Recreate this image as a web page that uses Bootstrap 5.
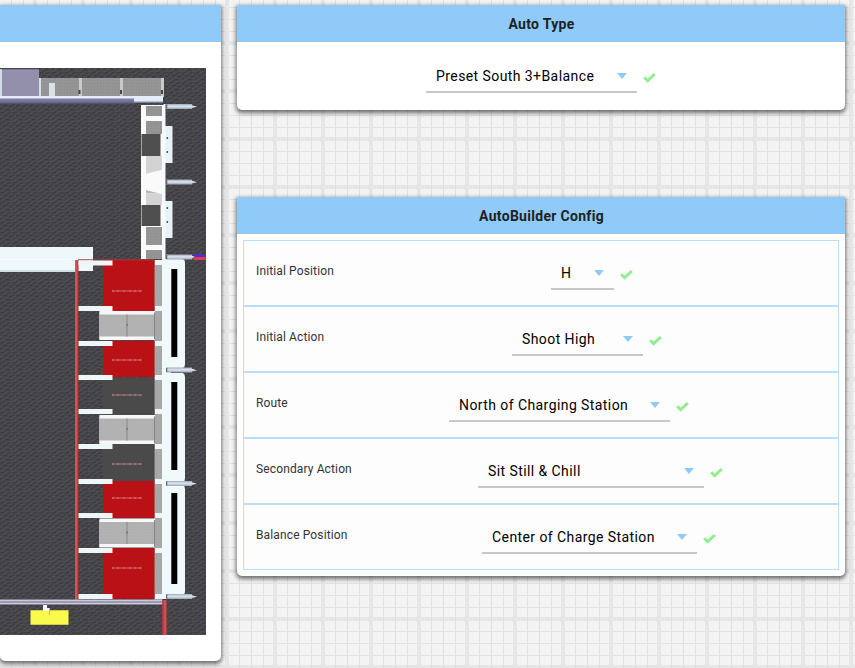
<!DOCTYPE html>
<html lang="en">
<head>
<meta charset="utf-8">
<meta name="viewport" content="width=device-width, initial-scale=1">
<title>AutoBuilder</title>
<link href="https://cdn.jsdelivr.net/npm/bootstrap@5.3.0/dist/css/bootstrap.min.css" rel="stylesheet">
<style>
body{height:668px;overflow:hidden;font-family:Roboto,"Liberation Sans",sans-serif;background-color:#f3f3f3;
background-image:
linear-gradient(90deg,#e6e6e6 4px,transparent 4px 14px,#e1e1e1 14px 15px,transparent 15px 26px,#e1e1e1 26px 27px,transparent 27px 38px,#e1e1e1 38px 39px,transparent 39px),
linear-gradient(#e6e6e6 4px,transparent 4px 14px,#e1e1e1 14px 15px,transparent 15px 26px,#e1e1e1 26px 27px,transparent 27px 38px,#e1e1e1 38px 39px,transparent 39px);
background-size:48px 48px;background-position:33px 41px}
.panel{border:0;border-radius:0 0 5px 5px;box-shadow:0 2px 4px 1px rgba(0,0,0,.55)}
.panel-title{height:37px;padding-left:1px;background:#90caf9;color:#212121;font-size:14px;font-weight:700;line-height:39px;letter-spacing:.3px}
.page{gap:16px;padding-top:5px}
.field-panel{width:221px;height:656px}
.side{width:608px;gap:87px}
.type-panel{height:105px}
.config-panel{height:379px}
.field-panel svg{margin-top:26px}
.options{margin:6px 6px 0}
.option-row{height:66px;border:1px solid #bbdefb;background:#fdfdfd}
.option-label{width:194px;padding:0 0 5px 12px;font-size:12px;color:#333;letter-spacing:.13px}
.picker{height:33px;padding:0 10px;border:0;border-bottom:2px solid #c8c8c8;background:transparent;color:#000;font-size:14px;line-height:1;letter-spacing:.42px;white-space:nowrap}
.option-row .picker{padding-top:2px}
.caret{width:10px;height:6px;margin-top:1px;background:#90caf9;clip-path:polygon(0 0,100% 0,50% 100%)}
.option-row .caret{margin-top:0}
.tick{margin:1px 0 0 6px}
.option-row .tick{margin-top:2px}
.type-row{padding-top:18px}
.type-picker{width:211px;margin-left:189px}
.p1{width:63px;margin-left:113px}.p2{width:131px;margin-left:74px}.p3{width:221px;margin-left:11px}.p4{width:226px;margin-left:40px}.p5{width:215px;margin-left:44px}
</style>
<script src="https://cdn.jsdelivr.net/npm/bootstrap@5.3.0/dist/js/bootstrap.bundle.min.js"></script>
</head>
<body>
<svg width="0" height="0" class="position-absolute"><symbol id="tick" viewBox="0 0 13 11"><path d="M1.2 5.2 4.7 8.7 11.8 2" fill="none" stroke="#90ee90" stroke-width="3"/></symbol></svg>
<main class="page d-flex align-items-start">
<section class="card panel field-panel flex-shrink-0">
<div class="panel-title"></div>
<svg width="206" height="567" viewBox="0 68 206 567" class="d-block" role="img" aria-label="Playing field">
<defs>
<pattern id="carpet" width="13" height="10" patternUnits="userSpaceOnUse"><rect width="13" height="10" fill="#444348"/><path d="M0 1.5 3 .5M5 2.5 9 1.5M10 1l3 .5M2 4.5l4-1M8 5l4-1M0 7l3-1M5 8l4-1M10 9l3-1M2 9.5l3-.5" stroke="#504f54" stroke-width="1.2" fill="none"/><path d="M1 3 4 2.5M7 3.5 10 3M3 6 6 5M9 7l3-1M0 9h2M6 9.7h3" stroke="#3a393e" stroke-width="1.2" fill="none"/></pattern>
<pattern id="metal" width="3" height="3" patternUnits="userSpaceOnUse"><rect width="3" height="3" fill="#929292"/><path d="M0 0h1v1H0zM2 1h1v1H2z" fill="#9a9a9a"/></pattern>
<pattern id="plate" width="3" height="3" patternUnits="userSpaceOnUse"><rect width="3" height="3" fill="#b3b3b3"/><path d="M0 0h1v1H0zM2 1h1v1H2z" fill="#adadad"/></pattern>
<linearGradient id="pin" x1="0" y1="0" x2="0" y2="1"><stop stop-color="#9fa6b4"/><stop offset=".45" stop-color="#dce6f5"/><stop offset="1" stop-color="#9fa6b4"/></linearGradient>
<g id="post"><path d="M0 0H26V1.2L31 2.7 26 4V5H0Z" fill="url(#pin)"/><path d="M0 .5h1.3v4H0z" fill="#626777"/></g>
<g id="marks"><path d="M112 0h30" stroke="#d99" stroke-width=".8" opacity=".8"/><path d="M113-1v2m5-2v2m6-2v2m6-2v2m5-2v2m5-2v2" stroke="#d99" stroke-width=".6"/></g>
<g id="ramp"><path d="M99 0H155V27H99Z" fill="url(#plate)"/><path d="M99.5-1.5H155V2H99.5ZM99.5 24H155V27.5H99.5Z" fill="#f7f7f7"/><path d="M127 2v22M154.5 0v27" stroke="#858585"/><circle cx="127" cy="12.5" r="1" fill="#777"/></g>
</defs>
<path fill="url(#carpet)" d="M0 68H206V635H0Z"/>
<!-- North wall and loading bay -->
<path fill="#d4dce6" d="M0 69h2v29H0zM39 78h2v20h-2z"/>
<path fill="#9290aa" d="M2 69h37v27H2z"/><path d="M1 68.8h38" stroke="#46455b"/>
<path fill="url(#metal)" d="M41 78h123v19H41z"/>
<path fill="#c9c9c9" d="M79 78h3v19h-3zM120 78h3v19h-3zM161 78h3v19h-3z"/><path fill="#444" d="M78.5 90h2v4h-2zM120 90h2v4h-2zM161 90h2v4h-2z"/>
<path fill="#dbe2e6" d="M49 83h6v14h-6z"/>
<path fill="#e5edf8" d="M0 96h163v6H0z"/><path fill="#7c7a9f" d="M0 98.5h134v4H0z"/><path fill="#66648d" d="M0 101.5h134v2H0z"/><path fill="#b5bfd0" d="M134 101h29v1.5h-29z"/>
<!-- Substation tower -->
<path fill="#fafafa" d="M141 105h24v154h-24z"/><path fill="url(#metal)" d="M146 106h16v10h-16zM146 121h16v13h-16zM146 227h16v18h-16zM146 250h16v9h-16z"/><path fill="#d3d3d3" d="M146 156h16v14l-16 4zM146 194h16v11h-16z"/><path fill="#b7b7b7" d="m146 190 15 3.5h-15z"/><path fill="#fafafa" d="m146 174 16-4v24l-16-4z"/><path fill="#4e4e4e" d="M141.5 134h19v22h-19zM141.5 205h19v21h-19z"/>
<path fill="#e8f3f7" d="M165 126h7.5v37H165zM165 201h7.5v37H165z"/><path fill="#f5faff" d="M163.5 104h2v155h-2z"/><path stroke="#555" stroke-width="1.5" stroke-dasharray="2 12" d="M167.3 137v16M167.3 207v16"/>
<path fill="#eef8fa" d="M0 247h93v24H0z"/><path stroke="#fff" d="M0 259.5h78"/><path fill="#d1e0e5" d="M0 270h78v2H0z"/>
<!-- Scoring grids -->
<path fill="url(#metal)" d="M154 260h8v340h-8z"/><path fill="#bbb" fill-opacity=".5" d="M154.5 260h7.5v340h-7.5z"/>
<path fill="#b91115" d="M103 260h51.5v51H103zM103 341h51.5v36H103zM103 481h51.5v37H103zM103 548h51.5v51H103z"/>
<path fill="#4a4a4a" d="M103 378h51.5v37H103zM103 444h51.5v37H103z"/>
<path fill="#d75258" d="M75 260h3v340h-3z"/><path fill="#a82a2e" d="M77.5 260h1v340h-1z"/>
<path d="M78 259.8h76" stroke="#a43b3c" stroke-width="1"/>
<use href="#ramp" y="312.5"/><use href="#ramp" y="416.5"/><use href="#ramp" y="520"/>
<path fill="#eef6f8" d="M78.5 260.5h34v5h-34zM78.5 306h34v5h-34zM78.5 341h34v5h-34zM78.5 375h34v5h-34zM78.5 409h34v5h-34zM78.5 444h34v5h-34zM78.5 479h34v5h-34zM78.5 513h34v5h-34zM78.5 548h34v5h-34zM78.5 594h34v5h-34z"/>
<path fill="#eef6f8" d="M155 260h7v5h-7zM155 306h7v5h-7zM155 341h7v5h-7zM155 375h7v5h-7zM155 409h7v5h-7zM155 444h7v5h-7zM155 479h7v5h-7zM155 513h7v5h-7zM155 548h7v5h-7zM155 594h7v5h-7z"/>
<use href="#marks" y="291"/><use href="#marks" y="360"/><use href="#marks" y="395"/><use href="#marks" y="464"/><use href="#marks" y="498"/><use href="#marks" y="568"/>
<path fill="#f0f9fb" d="M162 259h20q3 0 3 4v101q0 3-2 4h-21zM162 373h21q2 1 2 4v101q0 3-2 4h-21zM162 485h21q2 1 2 4v102q0 4-3 4h-20zM162 365h9v10h-9zM162 479h9v10h-9zM162 594h9v5h-9z"/>
<path d="M171.3 269h6v88h-6zM171.3 382h6v88h-6zM171.3 493h6v91h-6z"/>
<!-- Baseline and axes -->
<path fill="#8b8b9b" d="M0 599.5h163v5H0z"/><path stroke="#c9ccdd" stroke-width="1.5" d="M0 600.5h162M0 603.5h162"/>
<path fill="#d64a50" d="M162.5 600h4v35h-4z"/><path fill="#b72c34" d="M162.5 600h1v35h-1z"/>
<path fill="#fafa4c" d="M30.5 610.3h38v14.4h-38z"/><path d="M43 605h4v3h3v3h-7z" fill="#f4f4fa"/><path d="M49.5 608v7" stroke="#a6a646" stroke-width=".7"/>
<use href="#post" x="166" y="104"/><use href="#post" x="166" y="179.5"/><use href="#post" x="166" y="254.5"/><use href="#post" x="166" y="367.5"/><use href="#post" x="166" y="481"/><use href="#post" x="166" y="594"/>
<path d="M192 254h10l4 2v2h-10z" fill="#4b32ca"/><path d="M193 257h13v3h-12z" fill="#df3b58"/>
</svg>
</section>
<div class="side d-flex flex-column flex-shrink-0">
<section class="card panel type-panel">
<div class="panel-title text-center">Auto Type</div>
<div class="type-row d-flex align-items-center">
<button class="picker type-picker d-flex align-items-center justify-content-between"><span>Preset South 3+Balance</span><i class="caret"></i></button><svg class="tick" width="13" height="11"><use href="#tick"/></svg>
</div>
</section>
<section class="card panel config-panel">
<div class="panel-title text-center">AutoBuilder Config</div>
<div class="options">
<div class="option-row d-flex align-items-center"><div class="option-label">Initial Position</div><button class="picker p1 d-flex align-items-center justify-content-between"><span>H</span><i class="caret"></i></button><svg class="tick" width="13" height="11"><use href="#tick"/></svg></div>
<div class="option-row d-flex align-items-center"><div class="option-label">Initial Action</div><button class="picker p2 d-flex align-items-center justify-content-between"><span>Shoot High</span><i class="caret"></i></button><svg class="tick" width="13" height="11"><use href="#tick"/></svg></div>
<div class="option-row d-flex align-items-center"><div class="option-label">Route</div><button class="picker p3 d-flex align-items-center justify-content-between"><span>North of Charging Station</span><i class="caret"></i></button><svg class="tick" width="13" height="11"><use href="#tick"/></svg></div>
<div class="option-row d-flex align-items-center"><div class="option-label">Secondary Action</div><button class="picker p4 d-flex align-items-center justify-content-between"><span>Sit Still &amp; Chill</span><i class="caret"></i></button><svg class="tick" width="13" height="11"><use href="#tick"/></svg></div>
<div class="option-row d-flex align-items-center"><div class="option-label">Balance Position</div><button class="picker p5 d-flex align-items-center justify-content-between"><span>Center of Charge Station</span><i class="caret"></i></button><svg class="tick" width="13" height="11"><use href="#tick"/></svg></div>
</div>
</section>
</div>
</main>
</body>
</html>
